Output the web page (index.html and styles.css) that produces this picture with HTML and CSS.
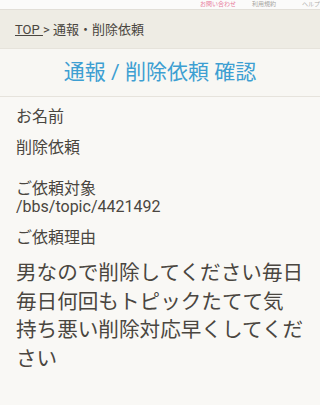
FILE: index.html
```html
<!DOCTYPE html>
<html lang="ja">
<head>
<meta charset="utf-8">
<link rel="stylesheet" href="styles.css">
</head>
<body>
<div class="page">
  <div class="topnav">
    <span class="nav-pink">お問い合わせ</span>
    <span class="nav-gray">利用規約</span>
    <span class="nav-gray2">ヘルプ</span>
  </div>
  <div class="crumb"><a class="crumb-link" href="#">TOP </a> &gt; 通報・削除依頼</div>
  <h1 class="title">通報 / 削除依頼 確認</h1>
  <div class="content">
    <p class="label">お名前</p>
    <p class="value">削除依頼</p>
    <p class="target">ご依頼対象<br>/bbs/topic/4421492</p>
    <p class="label reason-label">ご依頼理由</p>
    <p class="reason">男なので削除してください毎日毎日何回もトピックたてて気<br>持ち悪い削除対応早くしてください</p>
  </div>
</div>
</body>
</html>
```

FILE: styles.css
```css
html, body {
  margin: 0;
  padding: 0;
}
body {
  background: #f9f8f5;
  font-family: Roboto, "Noto Sans CJK JP", sans-serif;
  color: #4a4640;
}
.page {
  width: 320px;
  min-height: 405px;
  background: #f9f8f5;
  overflow: hidden;
}
.topnav {
  height: 10px;
  background: #fbfbfa;
  border-bottom: 1px solid #e2dfd8;
  display: flex;
  align-items: flex-start;
  font-size: 6px;
  line-height: 7px;
  white-space: nowrap;
  box-sizing: border-box;
}
.topnav span {
  display: block;
}
.nav-pink {
  color: #e87a9a;
  margin-left: 200px;
}
.nav-gray {
  color: #a8a6a2;
  margin-left: 16px;
}
.nav-gray2 {
  color: #b0aeaa;
  margin-left: 26px;
}
.crumb {
  background: #eeece4;
  height: 38px;
  line-height: 39px;
  padding-left: 15px;
  font-size: 13px;
  color: #4a4640;
  border-bottom: 1px solid #e6e3db;
}
.crumb-link {
  color: #4a4640;
  text-decoration: underline;
}
.title {
  margin: 0;
  height: 47px;
  line-height: 47px;
  text-align: center;
  font-size: 21px;
  font-weight: normal;
  color: #3d9fd2;
  background: #f8f7f3;
  border-bottom: 1px solid #e6e3dc;
}
.content {
  padding: 10px 14px 20px 16px;
  font-size: 16px;
  line-height: 20px;
}
.content p {
  margin: 0;
}
.value {
  margin-top: 11px !important;
}
.target {
  margin-top: 22px !important;
  line-height: 18px;
}
.reason-label {
  margin-top: 12px !important;
}
.reason {
  margin-top: 11px !important;
  font-size: 20.6px;
  line-height: 28.6px;
  color: #4a4640;
}
```
